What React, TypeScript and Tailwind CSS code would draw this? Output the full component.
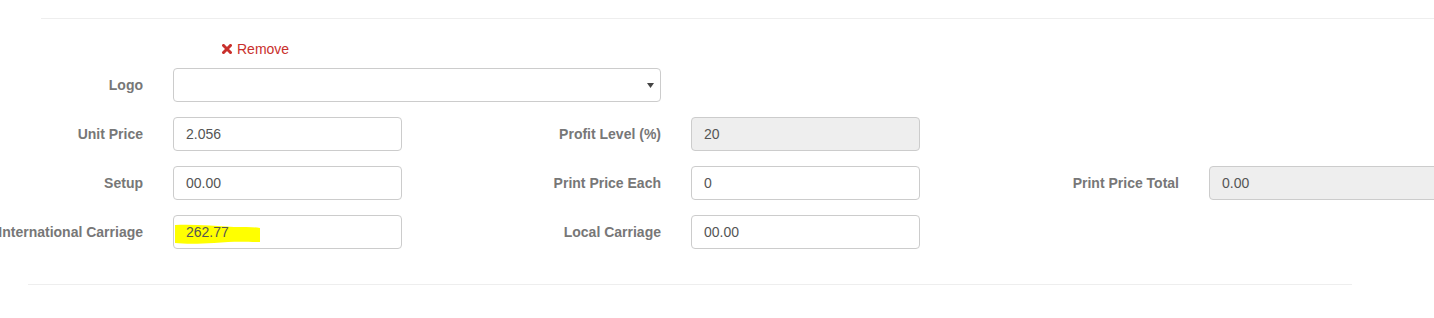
import React from "react";

type Field = {
  label: string;
  value: string;
  readOnly?: boolean;
  highlight?: boolean;
};

const rows: (Field | null)[][] = [
  [
    { label: "Unit Price", value: "2.056" },
    { label: "Profit Level (%)", value: "20", readOnly: true },
    null,
  ],
  [
    { label: "Setup", value: "00.00" },
    { label: "Print Price Each", value: "0" },
    { label: "Print Price Total", value: "0.00", readOnly: true },
  ],
  [
    { label: "International Carriage", value: "262.77", highlight: true },
    { label: "Local Carriage", value: "00.00" },
    null,
  ],
];

function Label({ text }: { text: string }) {
  return (
    <div className="w-[259px] shrink-0 pl-[15px] pr-[15px] text-right text-[14px] font-bold text-[#777] whitespace-nowrap">
      {text}
    </div>
  );
}

function Input({ field }: { field: Field }) {
  return (
    <div className="w-[259px] shrink-0 px-[15px]">
      <div
        className={`relative h-[34px] rounded-[4px] border border-[#ccc] px-[12px] flex items-center text-[14px] text-[#555] ${
          field.readOnly ? "bg-[#eee]" : "bg-white"
        }`}
      >
        {field.highlight && (
          <svg
            className="absolute left-0 top-[8px]"
            width="88"
            height="22"
            viewBox="0 0 88 22"
          >
            <path
              d="M1 1 C20 0 40 2 60 3 C72 3 80 3 86 4 L86 18 C75 18 60 17 40 19 C25 20 10 20 1 19 Z"
              fill="#ffff00"
            />
          </svg>
        )}
        <span className="relative">{field.value}</span>
      </div>
    </div>
  );
}

export default function App() {
  return (
    <div
      className="relative w-full h-[318px] overflow-hidden bg-white"
      style={{ fontFamily: '"Liberation Sans", Arial, sans-serif' }}
    >
      <div className="ml-[41px] mt-[18px] border-t border-[#eee]" />

      <div className="ml-[222px] mt-[20px] h-[20px] flex items-center gap-[5px] text-[14px] text-[#c9302c]">
        <svg width="10" height="10" viewBox="0 0 10 10">
          <path
            d="M1.5 1.5 L8.5 8.5 M8.5 1.5 L1.5 8.5"
            stroke="#c9302c"
            strokeWidth="3"
            strokeLinecap="square"
          />
        </svg>
        <span>Remove</span>
      </div>

      <div className="ml-[-101px] mt-[9px] flex flex-col gap-[15px]">
        <div className="flex items-center">
          <Label text="Logo" />
          <div className="w-[518px] shrink-0 px-[15px]">
            <div className="h-[34px] rounded-[4px] border border-[#ccc] bg-white flex items-center justify-end pr-[6px]">
              <svg width="7" height="5" viewBox="0 0 7 5">
                <path d="M0 0 L7 0 L3.5 5 Z" fill="#444" />
              </svg>
            </div>
          </div>
        </div>

        {rows.map((row, i) => (
          <div key={i} className="flex items-center">
            {row.map((f, j) =>
              f ? (
                <React.Fragment key={j}>
                  <Label text={f.label} />
                  <Input field={f} />
                </React.Fragment>
              ) : (
                <div key={j} className="w-[518px] shrink-0" />
              )
            )}
          </div>
        ))}
      </div>

      <div className="ml-[28px] mt-[35px] w-[1324px] border-t border-[#eee]" />
    </div>
  );
}
